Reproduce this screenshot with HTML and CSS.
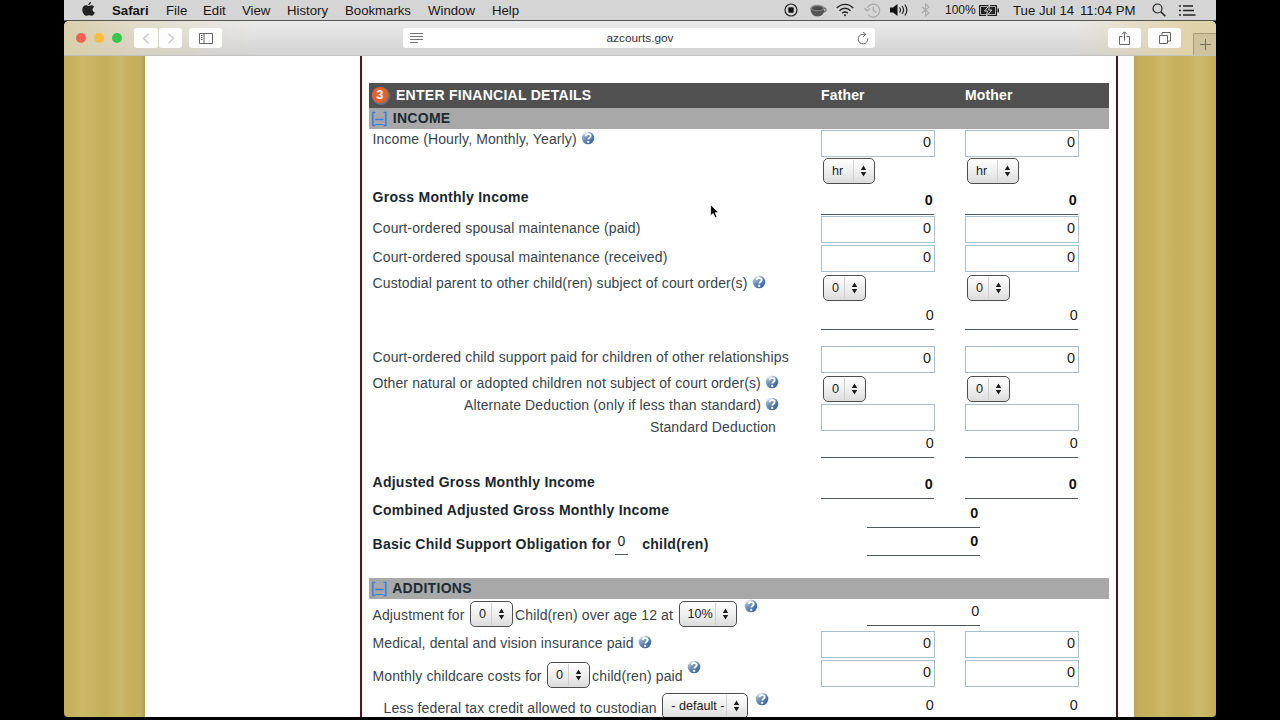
FILE: index.html
```html
<!DOCTYPE html>
<html lang="en">

<head>
	<meta charset="UTF-8">
	<title>Child Support Calculator</title>
	<link rel="stylesheet" href="styles.css">
</head>

<body>

	<svg class="defs" width="0" height="0">
		<defs>
			<linearGradient id="blue" x1="0" y1="0" x2="1" y2="1">
				<stop offset="0" stop-color="#c9d6e6" />
				<stop offset="0.5" stop-color="#6287b4" />
				<stop offset="1" stop-color="#2c568d" />
			</linearGradient>
			<symbol id="help" viewBox="0 0 14 14">
				<circle cx="7" cy="7" r="6.3" fill="url(#blue)" />
				<path d="M1 5A6.300 6.300 0 0 1 9 1Q4.500 2 1 5z" fill="#dce5f0" />
				<path d="M4.600 5.200C4.700 3.500 6 2.900 7.200 3c1.500 0 2.500.9 2.500 2 0 1.700-2.300 1.800-2.400 3.500" fill="none" stroke="#fff" stroke-width="1.900" />
				<circle cx="7.200" cy="10.900" r="1.150" fill="#fff" />
			</symbol>
			<symbol id="arrows" viewBox="0 0 6 12">
				<path d="M3 .5L5.700 5H.3zM3 11.500L.3 7h5.400z" fill="#1c1c1c" />
			</symbol>
		</defs>
	</svg>

	<div class="screen">

		<div class="menubar">
			<svg class="apple" width="13" height="14" viewBox="0 0 13 14">
				<path d="M9 0c.1 1.600-1.200 3-2.700 3C6.200 1.500 7.500.2 9 0zM6.500 4c.7 0 1.500-.8 2.900-.8 1.200 0 2.200.6 2.800 1.500-2.500 1.500-2 4.800.6 5.700-.6 1.600-1.800 3.400-3.100 3.400-1 0-1.400-.6-2.700-.6s-1.700.6-2.600.6C2.600 13.800.3 10.900.3 7.700c0-2.800 1.700-4.400 3.500-4.400 1.200 0 2 .7 2.700.7z" fill="#222" />
			</svg>
			<b>Safari</b>
			<span>File</span>
			<span>Edit</span>
			<span>View</span>
			<span>History</span>
			<span>Bookmarks</span>
			<span>Window</span>
			<span>Help</span>

			<svg width="14" height="14" viewBox="0 0 14 14">
				<circle cx="7" cy="7" r="6" fill="none" stroke="#222" stroke-width="1.200" />
				<rect x="4.300" y="4.300" width="5.400" height="5.400" rx="1" fill="#111" />
			</svg>
			<svg width="17" height="13" viewBox="0 0 17 13">
				<path d="M13 4c4-.5 4 3.500 0 4" fill="none" stroke="#777" stroke-width="1.300" />
				<path d="M.5 4c0 5 2.500 8.500 7 8.500s7-3.500 7-8.500z" fill="#555" />
				<ellipse cx="7.500" cy="4" rx="7" ry="3.200" fill="#888" />
				<ellipse cx="7.500" cy="4.300" rx="5.200" ry="2" fill="#484848" />
			</svg>
			<svg width="18" height="14" viewBox="0 0 18 14" fill="none" stroke="#222" stroke-width="1.400">
				<path d="M.8 5C5.500.2 12.500.2 17.200 5M3.500 7.700c3.200-3.200 7.800-3.200 11 0M6.200 10.200c1.700-1.500 3.900-1.500 5.600 0" />
				<circle cx="9" cy="12.200" r="1" fill="#222" stroke="none" />
			</svg>
			<svg width="17" height="15" viewBox="0 0 17 15" fill="none" stroke="#aaa" stroke-width="1.200">
				<path d="M3.200 5A6.500 6.500 0 1 1 4 11.500M9.300 3.500v4l3 2M.5 5l2.500 3 3-2.500" />
			</svg>
			<svg width="19" height="14" viewBox="0 0 19 14" fill="none" stroke="#222" stroke-width="1.200">
				<path d="M0 4.500h3L7.500 1v12L3 9.500H0z" fill="#111" stroke="none" />
				<path d="M9.500 4.500q2 2.500 0 5M12 3q3.200 4 0 8M14.800 1.500q4.200 5.500 0 11" />
			</svg>
			<svg width="9" height="14" viewBox="0 0 9 14" fill="none" stroke="#aaa" stroke-width="1.100">
				<path d="M1 4l7 6-3.500 3V1L8 4l-7 6" />
			</svg>
			<span class="percent">100%</span>
			<svg width="20" height="11" viewBox="0 0 20 11">
				<rect x=".6" y=".6" width="16.800" height="9.800" fill="none" stroke="#222" stroke-width="1.200" />
				<path d="M2 2h14v7H2zM18.500 3.500H20v4h-1.500z" fill="#222" />
				<path d="M10.500 0L5.500 6h3l-1 5 5.500-6H9.700z" fill="#222" stroke="#d5d5d5" stroke-width="1" />
			</svg>
			<span>Tue Jul 14</span>
			<span>11:04 PM</span>
			<svg width="14" height="14" viewBox="0 0 14 14" fill="none" stroke="#222" stroke-width="1.200">
				<circle cx="5.500" cy="5.500" r="4.500" />
				<path d="M8.800 8.800l4.500 4.500" stroke-width="1.600" />
			</svg>
			<svg width="17" height="11" viewBox="0 0 17 11" fill="none" stroke="#222" stroke-width="1.500">
				<path d="M0 1h2M0 5.500h2M0 10h2M4 1h10M4 5.500h11M4 10h12.500" />
			</svg>
		</div>

		<div class="toolbar">
			<div class="lights">
				<i class="red"></i>
				<i class="yellow"></i>
				<i class="green"></i>
			</div>
			<div class="btn back">
				<svg width="8" height="11" viewBox="0 0 8 11"><path d="M6.500.8L1.500 5.500l5 4.700" fill="none" stroke="#c4c4c4" stroke-width="1.200" /></svg>
			</div>
			<div class="btn next">
				<svg width="8" height="11" viewBox="0 0 8 11"><path d="M1.500.8l5 4.700-5 4.700" fill="none" stroke="#c4c4c4" stroke-width="1.200" /></svg>
			</div>
			<div class="btn sidebar">
				<svg width="14" height="11" viewBox="0 0 14 11" fill="none" stroke="#666"><path d="M.5.5h13v10H.5zM5 .5v10M2 2.500h1.500M2 4.500h1.500M2 6.500h1.500" /></svg>
			</div>
			<div class="address">
				<svg width="13" height="10" viewBox="0 0 13 10" stroke="#777"><path d="M0 .5h13M0 3.500h13M0 6.500h13M0 9.500h8" /></svg>
				<span>azcourts.gov</span>
				<svg width="12" height="13" viewBox="0 0 12 13" fill="none" stroke="#666"><path d="M10.700 6.500A4.800 4.800 0 1 1 6 2.300h2.500M6 0l2.800 2.300L6 4.800" /></svg>
			</div>
			<div class="btn share">
				<svg width="11" height="14" viewBox="0 0 11 14" fill="none" stroke="#666"><path d="M3.500 5.500h-3v8h10v-8h-3M5.500 9.500V1M3 3.300L5.500.8 8 3.300" /></svg>
			</div>
			<div class="btn tabs">
				<svg width="12" height="12" viewBox="0 0 12 12" fill="none" stroke="#666"><path d="M.5 3.500h8v8h-8zM3 3V.5h8.500V9H9" /></svg>
			</div>
			<div class="newtab">
				<svg width="11" height="11" viewBox="0 0 11 11" stroke="#776f58"><path d="M5.500 0v11M0 5.500h11" /></svg>
			</div>
		</div>

		<div class="page">
			<div class="content">
				<div class="container">
					<form>
						<div class="title">
							<span class="step">3</span>
							<h2>ENTER FINANCIAL DETAILS</h2>
							<b>Father</b>
							<b>Mother</b>
						</div>

						<div class="section"><a>[<u>–</u>]</a> INCOME</div>

						<div class="row income">
							<label>Income (Hourly, Monthly, Yearly) <svg class="help"><use href="#help" /></svg></label>
							<div>
								<input type="text" value="0">
								<span class="select hr">hr<svg><use href="#arrows" /></svg></span>
							</div>
							<div>
								<input type="text" value="0">
								<span class="select hr">hr<svg><use href="#arrows" /></svg></span>
							</div>
						</div>

						<div class="row gross strong">
							<label>Gross Monthly Income</label>
							<output>0</output>
							<output>0</output>
						</div>

						<div class="row paid">
							<label>Court-ordered spousal maintenance (paid)</label>
							<input type="text" value="0">
							<input type="text" value="0">
						</div>

						<div class="row received">
							<label>Court-ordered spousal maintenance (received)</label>
							<input type="text" value="0">
							<input type="text" value="0">
						</div>

						<div class="row custodial">
							<label>Custodial parent to other child(ren) subject of court order(s) <svg class="help"><use href="#help" /></svg></label>
							<div>
								<span class="select">0<svg><use href="#arrows" /></svg></span>
								<output>0</output>
							</div>
							<div>
								<span class="select">0<svg><use href="#arrows" /></svg></span>
								<output>0</output>
							</div>
						</div>

						<div class="row support">
							<label>Court-ordered child support paid for children of other relationships</label>
							<input type="text" value="0">
							<input type="text" value="0">
						</div>

						<div class="row natural">
							<label>Other natural or adopted children not subject of court order(s) <svg class="help"><use href="#help" /></svg></label>
							<div>
								<span class="select">0<svg><use href="#arrows" /></svg></span>
							</div>
							<div>
								<span class="select">0<svg><use href="#arrows" /></svg></span>
							</div>
						</div>

						<div class="row deduction">
							<label>
								<p>Alternate Deduction (only if less than standard) <svg class="help"><use href="#help" /></svg></p>
								<p>Standard Deduction</p>
							</label>
							<div>
								<input type="text" value="">
								<output>0</output>
							</div>
							<div>
								<input type="text" value="">
								<output>0</output>
							</div>
						</div>

						<div class="row adjusted strong">
							<label>Adjusted Gross Monthly Income</label>
							<output>0</output>
							<output>0</output>
						</div>

						<div class="row combined strong">
							<label>Combined Adjusted Gross Monthly Income</label>
							<output>0</output>
						</div>

						<div class="row basic strong">
							<label class="inline">
								<span>Basic Child Support Obligation for</span>
								<span class="count">0</span>
								<span>child(ren)</span>
							</label>
							<output>0</output>
						</div>

						<div class="section"><a>[<u>–</u>]</a> ADDITIONS</div>

						<div class="row adjustment">
							<label class="inline">
								<span>Adjustment for</span>
								<span class="select">0<svg><use href="#arrows" /></svg></span>
								<span>Child(ren) over age 12 at</span>
								<span class="select pct">10%<svg><use href="#arrows" /></svg></span>
								<svg class="help"><use href="#help" /></svg>
							</label>
							<output>0</output>
						</div>

						<div class="row medical">
							<label>Medical, dental and vision insurance paid <svg class="help"><use href="#help" /></svg></label>
							<input type="text" value="0">
							<input type="text" value="0">
						</div>

						<div class="row childcare">
							<label class="inline">
								<span>Monthly childcare costs for</span>
								<span class="select">0<svg><use href="#arrows" /></svg></span>
								<span>child(ren) paid</span>
								<svg class="help"><use href="#help" /></svg>
							</label>
							<input type="text" value="0">
							<input type="text" value="0">
						</div>

						<div class="row credit">
							<label class="inline">
								<span>Less federal tax credit allowed to custodian</span>
								<span class="select default">- default -<svg><use href="#arrows" /></svg></span>
								<svg class="help"><use href="#help" /></svg>
							</label>
							<output>0</output>
							<output>0</output>
						</div>
					</form>
				</div>
			</div>
		</div>

		<svg class="pointer" width="10" height="15" viewBox="0 0 10 15">
			<path d="M.6.8v11l2.600-2.300 1.900 4.300 2-.9-1.900-4.200h3.600z" fill="#000" stroke="#fff" stroke-width=".8" />
		</svg>
	</div>
</body>

</html>
```
FILE: styles.css
```css
* {
	box-sizing: border-box;
}

body {
	margin: 0;
	background-color: #000;
	height: 720px;
	overflow: hidden;
	font-family: "Liberation Sans", Arial, sans-serif;
}

svg {
	display: block;
}

.defs {
	position: absolute;
}

.screen {
	position: relative;
	width: 1152px;
	height: 717px;
	margin: 0 auto;
	overflow: hidden;
	border-radius: 0 0 4px 4px;
	display: flex;
	flex-direction: column;
}

/* mac menu bar */
.menubar {
	display: grid;
	grid-template-columns: 30px 54px 37px 39px 45px 58px 83px 64px 292px 26px 26px 28px 26px 31px 24px 34px 34px 67px 72px 27px 20px;
	align-items: center;
	flex: none;
	height: 21px;
	padding-left: 18px;
	background-color: #d5d5d5;
	border-bottom: 1px solid #55554f;
	font-size: 13.2px;
	line-height: 19px;
	color: #161616;
	white-space: nowrap;
}

.menubar .apple {
	margin-top: -2px;
}

.menubar .percent {
	font-size: 12px;
}

/* safari toolbar */
.toolbar {
	display: flex;
	align-items: center;
	flex: none;
	height: 35px;
	padding-left: 12px;
	border-radius: 5px 5px 0 0;
	border-bottom: 1px solid #c2c2be;
	background: linear-gradient(to right, #d9cfaa 0, rgba(217, 207, 170, .5) 70px, rgba(220, 220, 220, 0) 190px, rgba(220, 220, 220, 0) 1010px, #dfd2a8 1130px), linear-gradient(#ebebeb, #d3d3d3);
}

.lights {
	display: flex;
	gap: 8px;
	width: 58px;
}

.lights i {
	width: 10px;
	height: 10px;
	border-radius: 50%;
}

.red {
	background-color: #f95f57;
}

.yellow {
	background-color: #fcbb3d;
}

.green {
	background-color: #36c84b;
}

.btn {
	display: flex;
	align-items: center;
	justify-content: center;
	height: 20px;
	width: 33px;
	background-color: #fdfdfd;
	border-radius: 3px;
}

.back {
	width: 24px;
	margin-right: 1px;
}

.next {
	width: 23px;
	margin-right: 7px;
}

.address {
	display: flex;
	align-items: center;
	justify-content: space-between;
	width: 472px;
	height: 20px;
	margin: 0 233px 0 181px;
	padding: 0 6px 0 7px;
	background-color: #fff;
	border-radius: 3px;
	font-size: 11.8px;
	color: #333;
}

.tabs {
	margin: 0 12px 0 7px;
}

.newtab {
	display: flex;
	align-items: center;
	justify-content: center;
	align-self: flex-end;
	width: 23px;
	height: 22px;
	background-color: #cfc39f;
	border: 1px solid #a79d7e;
	border-width: 1px 0 0 1px;
}

/* web page */
.page {
	flex: 1;
	padding: 0 82px 0 81px;
	background: linear-gradient(to right, #c5ae59 0, #c6b15e 8px, #cbb868 18px, #c8b461 30px, #c4ae59 42px, #c9b463 50px, #cbb86a 56px, #c6b05e 66px, #c4af5c 77px, #b09d58 81px, #b8a458 1070px, #c5ae5a 1074px, #c6b05c 1088px, #ccb869 1098px, #c6b05c 1112px, #c7b15f 1124px, #cdba6d 1134px, #c8b362 1144px, #c3ac58 1152px);
}

.content {
	height: 661px;
	background-color: #fff;
	padding-left: 215px;
}

.container {
	width: 758px;
	height: 661px;
	border: 2px solid #5f0f1c;
	border-width: 0 2px;
	padding: 27px 7px 0 7px;
}

form {
	width: 740px;
	font-size: 14px;
	letter-spacing: .125px;
	color: #39444a;
}

.title {
	display: grid;
	grid-template-columns: 27px 425px 144px 100px;
	align-items: center;
	height: 25px;
	padding-bottom: 2px;
	background-color: #505050;
	color: #fff;
	letter-spacing: .27px;
}

.title b {
	letter-spacing: .15px;
}

.title h2 {
	margin: 1px 0 0;
	font-size: 14px;
}

.step {
	width: 16px;
	height: 16px;
	margin: 0 0 0 3px;
	border-radius: 50%;
	background-color: #e4602c;
	box-shadow: 1px 1px 0 1px #6c737b;
	font-size: 13px;
	font-weight: bold;
	line-height: 16px;
	text-align: center;
}

.section {
	height: 21px;
	padding-left: 2px;
	background-color: #a8a8a8;
	color: #1c2b31;
	font-weight: bold;
	letter-spacing: .3px;
	line-height: 20px;
}

.section a {
	color: #2d80e6;
	margin-right: 1px;
	font-weight: normal;
	-webkit-text-stroke: .3px #2d80e6;
}

.row {
	display: grid;
	grid-template-columns: 448.5px 114px 144px;
	align-items: start;
	padding-left: 3.5px;
	line-height: 20px;
}

.row > :nth-child(3) {
	margin-left: 30px;
}

label {
	display: block;
	white-space: nowrap;
}

.help {
	display: inline-block;
	width: 14px;
	height: 14px;
	vertical-align: -1px;
}

input {
	display: block;
	width: 114px;
	height: 27px;
	padding: 0 3px 3px;
	border: 1px solid #a9c0ca;
	background-color: #fff;
	font-family: inherit;
	font-size: 14.4px;
	text-align: right;
	color: #222;
}

output {
	display: block;
	width: 113px;
	height: 29px;
	border-bottom: 1px solid #51585b;
	line-height: 28px;
	text-align: right;
	font-size: 14.4px;
	color: #222;
}

.strong {
	color: #1a272d;
	font-weight: bold;
	letter-spacing: .27px;
}

.strong output {
	padding-right: 1px;
	color: #111;
}

.select {
	display: flex;
	align-items: center;
	width: 43px;
	height: 26px;
	margin-left: 2px;
	padding-left: 8px;
	border: 1px solid #4e4e4e;
	border-radius: 5px;
	background: linear-gradient(#fff, #ececec 60%, #dcdcdc);
	font-size: 12.6px;
	letter-spacing: 0;
	line-height: 22px;
	color: #222;
}

.select svg {
	width: 21px;
	height: 22px;
	margin-left: auto;
	padding: 5px 1px 5px 0;
	border-left: 1px solid #d0d0d0;
}

.hr {
	width: 52px;
	margin-top: 1px;
}

.pct {
	width: 58px;
}

.default {
	width: 86px;
}

.income {
	height: 57px;
}

.income input {
	margin-top: 1px;
}

.gross {
	height: 29px;
}

.gross label {
	line-height: 23px;
}

.paid {
	height: 30px;
	padding-top: 1px;
}

.paid label {
	margin-top: 2px;
}

.received {
	height: 29px;
}

.received label {
	margin-top: 2px;
}

.custodial {
	height: 72px;
}

.custodial label {
	margin-top: -1px;
}

.custodial .select {
	margin-top: 1px;
}

.support {
	height: 27px;
}

.support label {
	margin-top: 1px;
}

.natural {
	height: 31px;
}

.natural .select {
	margin-top: 3px;
}

.deduction {
	height: 66px;
}

.deduction label {
	width: 406.5px;
	text-align: right;
}

.deduction p {
	margin: -9px 0 11px;
	height: 20px;
}

.deduction p:last-child {
	padding-right: 3px;
}

.deduction output {
	height: 27px;
	line-height: 24px;
}

.adjusted {
	height: 29px;
}

.adjusted label {
	margin-top: 2px;
}

.combined,
.basic {
	height: 28px;
}

.combined label {
	margin-top: 1px;
}

.combined,
.basic,
.adjustment {
	grid-template-columns: 494px 114px;
}

.basic {
	height: 51px;
}

.count {
	width: 13px;
	height: 22px;
	margin: 0 14px 0 4px;
	border-bottom: 1px solid #51585b;
	font-weight: normal;
	line-height: 16px;
	text-align: center;
}

.basic .inline {
	padding-top: 6px;
}

.inline {
	display: flex;
	align-items: center;
}

/* the help icons ride above the text on rows with a select */
.inline .select {
	margin: 0 2px 3px 5.5px;
}

.inline .help {
	margin: 0 0 18px 5px;
}

.adjustment {
	height: 32px;
}

.adjustment output {
	height: 27px;
	line-height: 24px;
}

.medical {
	height: 29px;
}

.medical label {
	margin-top: 2px;
}

.childcare .inline,
.adjustment .inline {
	height: 32px;
}

.childcare {
	height: 32px;
}

.childcare .help {
	margin-left: 4px;
}

.credit .inline {
	height: 31px;
	padding-left: 11px;
}

.credit output {
	border: 0;
	line-height: 26px;
}

.pointer {
	position: absolute;
	left: 646px;
	top: 204px;
}
```
